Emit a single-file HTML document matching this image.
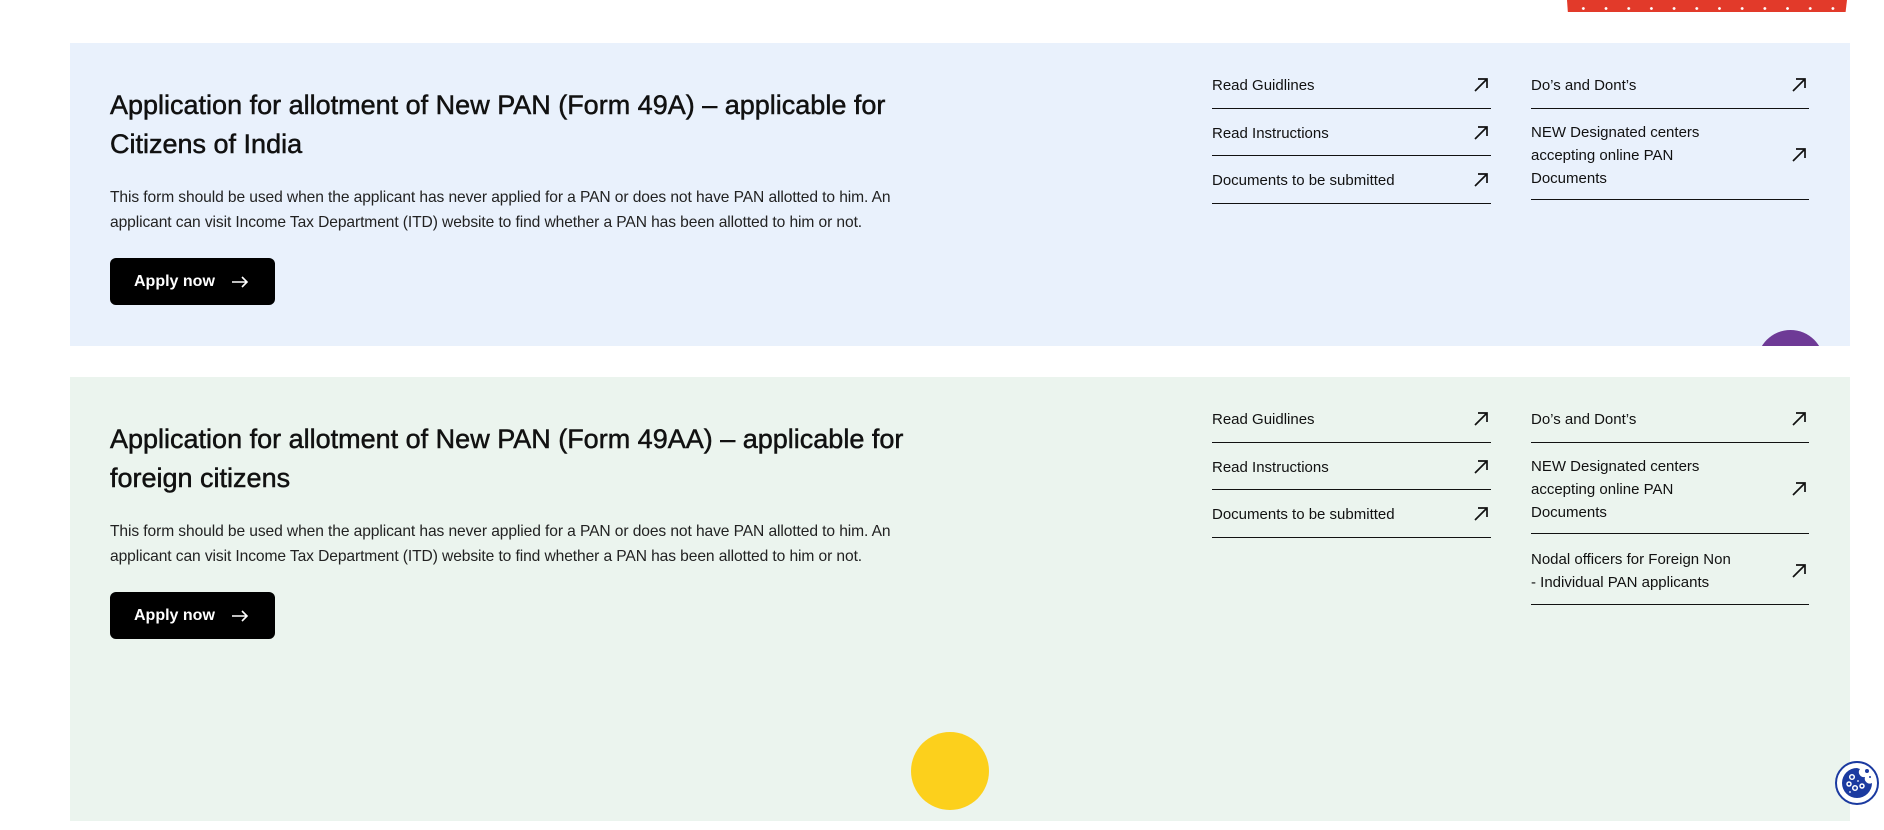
<!DOCTYPE html>
<html><head><meta charset="utf-8"><style>
*{margin:0;padding:0;box-sizing:border-box}
body{width:1884px;height:830px;background:#fff;position:relative;overflow:hidden;font-family:"Liberation Sans",sans-serif;color:#111}
.panel{position:absolute;left:70px;width:1780px;overflow:hidden}
h2{position:absolute;left:40px;font-size:27px;font-weight:normal;-webkit-text-stroke:0.5px #111;line-height:38.5px;width:860px}
p{position:absolute;left:40px;font-size:15.6px;line-height:25px;color:#222;width:840px;letter-spacing:-0.1px}
.btn{position:absolute;left:40px;width:165px;height:47px;background:#000;border-radius:6px;color:#fff;font-size:16px;font-weight:bold;display:flex;align-items:center;padding-left:24px}
.btn svg{margin-left:16px}
.lk{position:absolute;border-bottom:1.5px solid #111;font-size:15px;line-height:23px;color:#111}
.lk span{display:block;width:210px}
.lk svg{position:absolute;right:-4px;top:50%;margin-top:-16px}
</style></head><body>
<div style="position:absolute;left:1567px;top:0;width:280px;height:12px;background:#e23a2a;clip-path:polygon(0 0,100% 0,99.5% 100%,0.3% 100%)">
<div style="position:absolute;left:5px;right:5px;top:7px;height:3px;background:radial-gradient(circle,#fff 1.2px,transparent 1.6px) 0 0/22.7px 3px repeat-x"></div></div>

<div class="panel" style="top:43px;height:303px;background:#e9f1fc">
<h2 style="top:43px">Application for allotment of New PAN (Form 49A) – applicable for Citizens of India</h2>
<p style="top:142px">This form should be used when the applicant has never applied for a PAN or does not have PAN allotted to him. An applicant can visit Income Tax Department (ITD) website to find whether a PAN has been allotted to him or not.</p>
<div class="btn" style="top:215px">Apply now<svg width="18" height="12" viewBox="0 0 18 12"><path d="M1 6H16M11 1L16 6L11 11" stroke="#fff" stroke-width="1.6" fill="none"/></svg></div>
<div style="position:absolute;left:1687px;top:287px;width:67px;height:67px;border-radius:50%;background:#6e3a96"></div>
</div>

<div class="panel" style="top:377px;height:444px;background:#ebf4ee">
<h2 style="top:43px">Application for allotment of New PAN (Form 49AA) – applicable for foreign citizens</h2>
<p style="top:142px">This form should be used when the applicant has never applied for a PAN or does not have PAN allotted to him. An applicant can visit Income Tax Department (ITD) website to find whether a PAN has been allotted to him or not.</p>
<div class="btn" style="top:215px">Apply now<svg width="18" height="12" viewBox="0 0 18 12"><path d="M1 6H16M11 1L16 6L11 11" stroke="#fff" stroke-width="1.6" fill="none"/></svg></div>
<div style="position:absolute;left:841px;top:355px;width:78px;height:78px;border-radius:50%;background:#fcd01c"></div>
</div>

<div id="links"></div>
<script>
const arrow='<svg width="28" height="28" viewBox="0 0 28 28"><path d="M8 20L20 8M11 8H20V17" stroke="#111" stroke-width="1.7" fill="none"/></svg>';
const L=[
[1212,72,108,["Read Guidlines"]],[1212,120,155,["Read Instructions"]],[1212,167,203,["Documents to be submitted"]],
[1531,72,108,["Do’s and Dont’s"]],[1531,120,199,["NEW Designated centers","accepting online PAN","Documents"]],
[1212,406,442,["Read Guidlines"]],[1212,454,489,["Read Instructions"]],[1212,501,537,["Documents to be submitted"]],
[1531,406,442,["Do’s and Dont’s"]],[1531,454,533,["NEW Designated centers","accepting online PAN","Documents"]],
[1531,547,604,["Nodal officers for Foreign Non","- Individual PAN applicants"]]];
let h='';
for(const [x,t,b,lines] of L){
 const w=x==1212?279:278;
 h+=`<div class="lk" style="left:${x}px;top:${t-6}px;width:${w}px;height:${b-t+7}px;padding-top:${(b-t-3-lines.length*23)/2+3}px"><span>${lines.join('<br>')}</span>${arrow}</div>`;
}
document.getElementById('links').innerHTML=h;
</script>

<div style="position:absolute;left:1835px;top:761px;width:44px;height:44px;border-radius:50%;background:#fff;border:2px solid #1b3aa0;display:flex;align-items:center;justify-content:center">
<svg width="34" height="34" viewBox="0 0 34 34"><path d="M17 2A15 15 0 1 0 32 17A5 5 0 0 1 25 11A5 5 0 0 1 20 3Z" fill="#1b3aa0"/>
<g fill="none" stroke="#fff" stroke-width="1.5"><circle cx="12" cy="11" r="2.3"/><circle cx="9" cy="18" r="2"/><circle cx="15" cy="22" r="2.3"/><circle cx="22" cy="20" r="2"/></g>
<circle cx="27" cy="5" r="2" fill="#1b3aa0"/><circle cx="30" cy="11" r="1" fill="#1b3aa0"/><circle cx="18" cy="15" r="0.9" fill="#fff"/><circle cx="10" cy="26" r="0.9" fill="#fff"/></svg></div>
</body></html>
